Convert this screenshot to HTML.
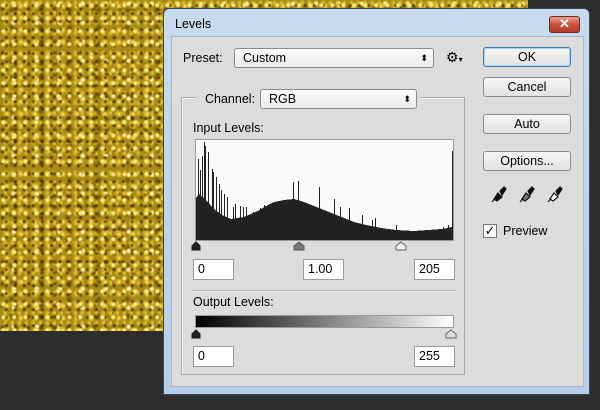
<!DOCTYPE html>
<html><head><meta charset="utf-8"><style>
*{margin:0;padding:0;box-sizing:border-box}
body{width:600px;height:410px;overflow:hidden;background:#2d2d2d;font-family:"Liberation Sans",sans-serif;font-size:12px;color:#000;position:relative}
.gl{position:absolute;background-color:#a88a14;
background-image:
radial-gradient(circle at 30% 40%,#fffbe0 0,#f5dc5a 1.5px,transparent 3px),
radial-gradient(circle at 70% 70%,#3a2a00 0,transparent 2.5px),
radial-gradient(circle at 50% 50%,#fff07a 0,#d8b020 2px,transparent 4px),
radial-gradient(circle at 20% 80%,#4a3600 0,transparent 3px),
radial-gradient(circle at 60% 20%,#ffffff 0,#ffe880 1.5px,transparent 3px),
radial-gradient(circle at 40% 60%,#6b5000 0,transparent 4px),
radial-gradient(circle at 80% 30%,#e8c838 0,transparent 3.5px);
background-size:11px 13px,9px 8px,14px 12px,13px 11px,23px 19px,29px 17px,7px 10px;}
.a{position:absolute}
.frame{left:163px;top:8px;width:427px;height:387px;background:linear-gradient(#c9dbee,#b6cfe8);border:1px solid #3b4654;border-radius:6px 6px 0 0}
.client{left:171px;top:36px;width:413px;height:351px;background:#dcdcdc;border:1px solid #a9b8c8}
.sel{background:linear-gradient(#fbfbfb,#ececec);border:1px solid #8a8a8a;border-radius:3px;padding-left:8px;line-height:18px;font-size:12.5px}
.sel:after{content:"\2B0D";position:absolute;right:5px;top:0;font-size:9px}
.btn{position:absolute;left:483px;width:88px;height:20px;background:linear-gradient(#f6f6f6,#e2e2e2);border:1px solid #8c8c8c;border-radius:3px;text-align:center;line-height:18px;font-size:12.5px}
.box{position:absolute;height:21px;width:41px;background:#fff;border:1px solid #9a9a9a;padding-left:4px;line-height:19px;font-size:12.5px}
</style></head><body>
<div class="gl" style="left:0;top:0;width:164px;height:331px"></div>
<div class="gl" style="left:164px;top:0;width:364px;height:9px"></div>
<div class="a frame"></div>
<div class="a" style="left:175px;top:17px;font-size:12.5px">Levels</div>
<div class="a" style="left:549px;top:16px;width:31px;height:17px;background:linear-gradient(#e8a293,#c7523c 50%,#b53d28);border:1px solid #6e2a1e;border-radius:3px;color:#fff;text-align:center;font-weight:bold;font-size:13px;line-height:14px">✕</div>
<div class="a client"></div>

<div class="a" style="left:183px;top:51px;font-size:12.5px">Preset:</div>
<div class="a sel" style="left:234px;top:48px;width:200px;height:20px">Custom</div>
<div class="a" style="left:446px;top:49px;font-size:14px">⚙<span style="font-size:8px">▾</span></div>

<div class="a" style="left:181px;top:97px;width:284px;height:278px;border:1px solid #a8a8a8;box-shadow:1px 1px 0 #f4f4f4 inset"></div>
<div class="a" style="left:196px;top:90px;width:224px;height:14px;background:#dcdcdc"></div>
<div class="a" style="left:205px;top:92px;font-size:12.5px">Channel:</div>
<div class="a sel" style="left:260px;top:89px;width:157px;height:20px">RGB</div>
<div class="a" style="left:193px;top:121px;font-size:12.5px">Input Levels:</div>

<svg class="a" style="left:195px;top:139px" width="260" height="102" shape-rendering="crispEdges">
<rect x="0.5" y="0.5" width="258" height="101" fill="#fafafa" stroke="#9a9a9a"/>
<g transform="translate(1,1)">
<polygon fill="#222" points="0,100 0,58 3,54 10,60 18,69 26,75 35,79 48,77 62,71 70,66 78,62 88,60 98,59 108,62 118,66 128,70 138,74 148,78 158,82 170,85 185,88 200,90 218,91 232,90 245,89 252,88 255,87 257,87 257,100"/>
<g stroke="#222" stroke-width="1">
<line x1="2.5" y1="100" x2="2.5" y2="19"/><line x1="4.5" y1="100" x2="4.5" y2="30"/><line x1="6.5" y1="100" x2="6.5" y2="16"/>
<line x1="8.5" y1="100" x2="8.5" y2="2"/><line x1="9.5" y1="100" x2="9.5" y2="6"/><line x1="12.5" y1="100" x2="12.5" y2="12"/>
<line x1="16.5" y1="100" x2="16.5" y2="29"/><line x1="17.5" y1="100" x2="17.5" y2="32"/><line x1="20.5" y1="100" x2="20.5" y2="37"/>
<line x1="23.5" y1="100" x2="23.5" y2="44"/><line x1="25.5" y1="100" x2="25.5" y2="50"/><line x1="28.5" y1="100" x2="28.5" y2="54"/>
<line x1="31.5" y1="100" x2="31.5" y2="57"/><line x1="37.5" y1="100" x2="37.5" y2="67"/><line x1="39.5" y1="100" x2="39.5" y2="64"/>
<line x1="44.5" y1="100" x2="44.5" y2="66"/><line x1="47.5" y1="100" x2="47.5" y2="67"/><line x1="50.5" y1="100" x2="50.5" y2="67"/>
<line x1="54.5" y1="100" x2="54.5" y2="77"/><line x1="57.5" y1="100" x2="57.5" y2="72"/><line x1="64.5" y1="100" x2="64.5" y2="68"/>
<line x1="68.5" y1="100" x2="68.5" y2="65"/><line x1="97.5" y1="100" x2="97.5" y2="42"/><line x1="102.5" y1="100" x2="102.5" y2="41"/>
<line x1="123.5" y1="100" x2="123.5" y2="47"/><line x1="138.5" y1="100" x2="138.5" y2="59"/><line x1="144.5" y1="100" x2="144.5" y2="67"/>
<line x1="153.5" y1="100" x2="153.5" y2="68"/><line x1="166.5" y1="100" x2="166.5" y2="75"/><line x1="176.5" y1="100" x2="176.5" y2="80"/>
<line x1="179.5" y1="100" x2="179.5" y2="78"/><line x1="200.5" y1="100" x2="200.5" y2="85"/><line x1="247.5" y1="100" x2="247.5" y2="87"/>
<line x1="252.5" y1="100" x2="252.5" y2="85"/><line x1="256.5" y1="100" x2="256.5" y2="11"/>
</g></g></svg>

<svg class="a" style="left:190px;top:240px" width="220" height="12">
<path d="M2,10 L2,6 L6,2 L10,6 L10,10 Z" fill="#222" stroke="#111"/>
<path d="M104,10 L104,6 L109,2 L114,6 L114,10 Z" fill="#7a7a7a" stroke="#555"/>
<path d="M206,10 L206,6 L211,2 L216,6 L216,10 Z" fill="#eee" stroke="#666"/>
</svg>
<div class="box" style="left:193px;top:259px">0</div>
<div class="box" style="left:303px;top:259px">1.00</div>
<div class="box" style="left:414px;top:259px">205</div>
<div class="a" style="left:191px;top:290px;width:266px;height:1px;background:#b0b0b0;box-shadow:0 1px 0 #f2f2f2"></div>
<div class="a" style="left:193px;top:295px;font-size:12.5px">Output Levels:</div>
<div class="a" style="left:195px;top:315px;width:259px;height:13px;background:linear-gradient(90deg,#000,#fff);border:1px solid #999"></div>
<svg class="a" style="left:190px;top:327px" width="270" height="13">
<path d="M2,11 L2,7 L6,3 L10,7 L10,11 Z" fill="#222" stroke="#111"/>
<path d="M256,11 L256,7 L261,3 L266,7 L266,11 Z" fill="#ddd" stroke="#666"/>
</svg>
<div class="box" style="left:193px;top:346px">0</div>
<div class="box" style="left:414px;top:346px">255</div>

<div class="btn" style="top:47px;border-color:#3c7fb1;box-shadow:0 0 0 1px #a6d2f2 inset">OK</div>
<div class="btn" style="top:77px">Cancel</div>
<div class="btn" style="top:114px">Auto</div>
<div class="btn" style="top:151px">Options...</div>
<svg class="a" style="left:490px;top:184px" width="80" height="20">
<g stroke="#111" stroke-width="1.2">
<path d="M2,18 L9,10" /><path d="M8,9 L12,13 L7,17 L4,15 Z" fill="#111"/><path d="M10,7 L14,3 L16,5 L12,11 Z" fill="#111"/>
<path d="M30,18 L37,10"/><path d="M36,9 L40,13 L35,17 L32,15 Z" fill="#777"/><path d="M38,7 L42,3 L44,5 L40,11 Z" fill="#111"/>
<path d="M58,18 L65,10"/><path d="M64,9 L68,13 L63,17 L60,15 Z" fill="#fff"/><path d="M66,7 L70,3 L72,5 L68,11 Z" fill="#111"/>
</g></svg>
<div class="a" style="left:483px;top:224px;width:14px;height:14px;background:#fff;border:1px solid #777;font-size:13px;line-height:12px;text-align:center">✓</div>
<div class="a" style="left:503px;top:224px;font-size:12.5px">Preview</div>
</body></html>
